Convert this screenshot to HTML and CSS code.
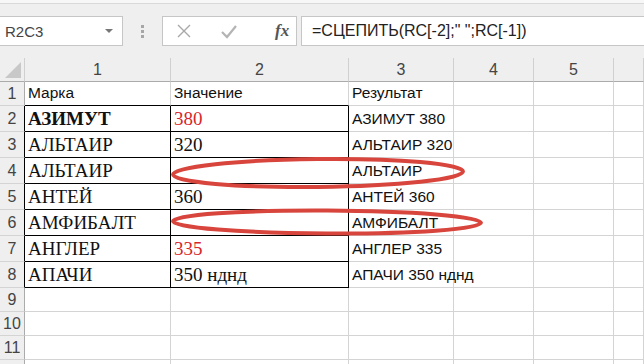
FILE: index.html
```html
<!DOCTYPE html>
<html lang="ru">
<head>
    <meta charset="UTF-8">
    <title>R2C3</title>
    <link rel="stylesheet" href="styles.css">
</head>
<body>
    <div class="edge"></div>
    <div class="toolbar">
        <div class="namebox">
            <span>R2C3</span>
            <span class="drop"></span>
        </div>
        <div class="grip"><i></i><i></i><i></i></div>
        <div class="fxbox">
            <svg width="16" height="16" viewBox="0 0 16 16"><path d="M2 2L14 14M14 2L2 14" stroke="#a8a8a8" stroke-width="1.4" fill="none"/></svg>
            <svg width="18" height="16" viewBox="0 0 18 16"><path d="M2 9L7 14L16 3" stroke="#b4b4b4" stroke-width="2.2" fill="none"/></svg>
            <span class="fx">fx</span>
        </div>
        <div class="formula">=СЦЕПИТЬ(RC[-2];" ";RC[-1])</div>
    </div>

    <div class="sheet">
        <table class="grid">
            <colgroup>
                <col style="width:25px"><col style="width:146px"><col style="width:178px">
                <col style="width:105px"><col style="width:80px"><col style="width:80px"><col style="width:30px">
            </colgroup>
            <tr class="hdr">
                <th class="corner"><span class="tri"></span></th>
                <th>1</th><th>2</th><th>3</th><th>4</th><th>5</th><th></th>
            </tr>
            <tr class="h24">
                <th class="rn">1</th>
                <td class="sans bb">Марка</td><td class="sans bb">Значение</td><td class="sans">Результат</td><td></td><td></td><td></td>
            </tr>
            <tr class="h26">
                <th class="rn br">2</th>
                <td class="k"><b>АЗИМУТ</b></td><td class="k red">380</td><td class="sans">АЗИМУТ 380</td><td></td><td></td><td></td>
            </tr>
            <tr class="h26">
                <th class="rn br">3</th>
                <td class="k">АЛЬТАИР</td><td class="k">320</td><td class="sans">АЛЬТАИР 320</td><td></td><td></td><td></td>
            </tr>
            <tr class="h26">
                <th class="rn br">4</th>
                <td class="k">АЛЬТАИР</td><td class="k"></td><td class="sans">АЛЬТАИР</td><td></td><td></td><td></td>
            </tr>
            <tr class="h26">
                <th class="rn br">5</th>
                <td class="k">АНТЕЙ</td><td class="k">360</td><td class="sans">АНТЕЙ 360</td><td></td><td></td><td></td>
            </tr>
            <tr class="h26">
                <th class="rn br">6</th>
                <td class="k">АМФИБАЛТ</td><td class="k"></td><td class="sans">АМФИБАЛТ</td><td></td><td></td><td></td>
            </tr>
            <tr class="h26">
                <th class="rn br">7</th>
                <td class="k">АНГЛЕР</td><td class="k red">335</td><td class="sans">АНГЛЕР 335</td><td></td><td></td><td></td>
            </tr>
            <tr class="h26">
                <th class="rn br">8</th>
                <td class="k">АПАЧИ</td><td class="k">350 нднд</td><td class="sans">АПАЧИ 350 нднд</td><td></td><td></td><td></td>
            </tr>
            <tr class="h24">
                <th class="rn">9</th><td></td><td></td><td></td><td></td><td></td><td></td>
            </tr>
            <tr class="h24">
                <th class="rn">10</th><td></td><td></td><td></td><td></td><td></td><td></td>
            </tr>
            <tr class="h24">
                <th class="rn">11</th><td></td><td></td><td></td><td></td><td></td><td></td>
            </tr>
            <tr class="h24">
                <th class="rn"></th><td></td><td></td><td></td><td></td><td></td><td></td>
            </tr>
        </table>

        <!-- пометки поверх таблицы -->
        <svg class="marks" width="644" height="306" viewBox="0 58 644 306">
            <ellipse cx="318" cy="173" rx="145" ry="14" transform="rotate(-0.6 318 173)"/>
            <ellipse cx="327" cy="222" rx="154" ry="11.5" transform="rotate(0.3 327 222)"/>
        </svg>
    </div>
</body>
</html>
```

FILE: styles.css
```css
*{
    margin:0;
    padding:0;
    box-sizing: border-box;
}
html, body{
    overflow: hidden;
}
body{
    width:644px;
    height:364px;
    background: #fff;
    font-family: "Liberation Sans", Arial, sans-serif;
}
.edge{
    height:4px;
    background: #f7f7f7;
    border-bottom: 1px solid #d9d9d9;
}
.toolbar{
    height:54px;
    background: #efefef;
    display: flex;
    align-items: flex-start;
    padding-top: 12px;
}
.namebox{
    width:123px;
    height:30px;
    background: #fff;
    border: 1px solid #c6c6c6;
    border-left: 0;
    display: flex;
    align-items: center;
    justify-content: space-between;
    padding: 0 9px 0 5px;
    font-size: 15px;
    color: #444;
}
.drop{
    width:0;
    height:0;
    border-left: 4px solid transparent;
    border-right: 4px solid transparent;
    border-top: 4px solid #777;
}
.grip{
    width:39px;
    height:30px;
    display: flex;
    flex-direction: column;
    align-items: center;
    justify-content: center;
    gap: 2px;
}
.grip i{
    width:3px;
    height:3px;
    background: #a6a6a6;
}
.fxbox{
    width:135px;
    height:30px;
    background: #fff;
    border: 1px solid #c6c6c6;
    display: flex;
    align-items: center;
    padding-left: 13px;
    gap: 28px;
}
.fx{
    font-family: "Liberation Serif", "Times New Roman", serif;
    font-style: italic;
    font-weight: bold;
    font-size: 17px;
    color: #555;
    margin-left: 9px;
}
.formula{
    flex: 1;
    height:30px;
    margin-left: 4px;
    background: #fff;
    border: 1px solid #c6c6c6;
    border-right: 0;
    padding-left: 10px;
    font-size: 16px;
    line-height: 28px;
    color: #222;
    white-space: nowrap;
}
.sheet{
    position: relative;
}
.grid{
    table-layout: fixed;
    width:644px;
    border-collapse: separate;
    border-spacing: 0;
}
.grid th, .grid td{
    border-right: 1px solid #d4d4d4;
    border-bottom: 1px solid #d4d4d4;
    padding: 0 3px;
    white-space: nowrap;
    overflow: hidden;
    vertical-align: bottom;
}
.grid th{
    background: #efefef;
    font-weight: normal;
    font-size: 16px;
    color: #444;
    text-align: center;
}
.hdr{
    height:24px;
}
.hdr th{
    border-bottom-color: #ababab;
    border-right-color: #d0d0d0;
    vertical-align: middle;
}
.corner{
    position: relative;
}
.tri{
    position: absolute;
    right:3px;
    bottom:3px;
    width:0;
    height:0;
    border-left: 16px solid transparent;
    border-bottom: 16px solid #c8c8c8;
}
.grid th.rn{
    border-right-color: #ababab;
    padding: 0;
    vertical-align: middle;
}
.h24{
    height:24px;
}
.h26{
    height:26px;
}
.grid td{
    font-family: "Liberation Serif", "Times New Roman", serif;
    font-size: 19px;
    color: #111;
    padding-bottom: 1px;
}
.grid td.sans{
    font-family: "Liberation Sans", Arial, sans-serif;
    font-size: 15.5px;
    padding-bottom: 3px;
    overflow: visible;
}
.grid td.bb{
    border-bottom-color: #000;
}
.grid td.k{
    border-right-color: #000;
    border-bottom-color: #000;
}
.grid th.br{
    border-right-color: #000;
}
.red{
    color: #d8262a !important;
}
.marks{
    position: absolute;
    left:0;
    top:0;
    pointer-events: none;
}
.marks ellipse{
    fill: none;
    stroke: #d8453d;
    stroke-width: 4;
}
```
